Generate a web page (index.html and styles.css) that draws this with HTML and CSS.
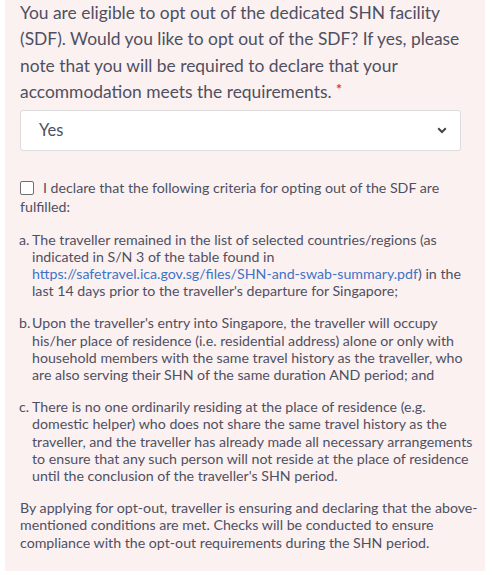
FILE: index.html
```html
<!DOCTYPE html>
<html>
<head>
<meta charset="utf-8">
<link rel="stylesheet" href="styles.css">
</head>
<body>
<div class="panel">
  <p class="question">You are eligible to opt out of the dedicated SHN facility (SDF). Would you like to opt out of the SDF? If yes, please note that you will be required to declare that your accommodation meets the requirements. <span class="req">*</span></p>
  <div class="select">
    <span>Yes</span>
    <svg class="chev" width="10" height="7" viewBox="0 0 10 7"><path d="M1.2 1.3 L5 5 L8.8 1.3" fill="none" stroke="#444" stroke-width="2"/></svg>
  </div>
  <div class="declare">
    <span class="box"></span>I declare that the following criteria for opting out of the SDF are fulfilled:
  </div>
  <ol class="criteria">
    <li><span class="mk">a.</span><span>The traveller remained in the list of selected countries/regions (as indicated in S/N 3 of the table found in <a href="#">https://safetravel.ica.gov.sg/files/SHN-and-swab-summary.pdf</a>) in the last 14 days prior to the traveller's departure for Singapore;</span></li>
    <li><span class="mk">b.</span><span>Upon the traveller's entry into Singapore, the traveller will occupy his/her place of residence (i.e. residential address) alone or only with household members with the same travel history as the traveller, who are also serving their SHN of the same duration AND period; and</span></li>
    <li><span class="mk">c.</span><span>There is no one ordinarily residing at the place of residence (e.g. domestic helper) who does not share the same travel history as the traveller, and the traveller has already made all necessary arrangements to ensure that any such person will not reside at the place of residence until the conclusion of the traveller's SHN period.</span></li>
  </ol>
  <p class="closing">By applying for opt-out, traveller is ensuring and declaring that the above-mentioned conditions are met. Checks will be conducted to ensure compliance with the opt-out requirements during the SHN period.</p>
</div>
</body>
</html>
```
FILE: styles.css
```css
html, body { margin: 0; padding: 0; background: #fff; }
body { font-family: Lato, "Liberation Sans", sans-serif; color: #4e5062; }
.panel {
  margin-left: 5px;
  width: 480px;
  height: 571px;
  background: #fcf1f1;
  padding: 0 5px 0 15px;
  box-sizing: border-box;
  display: flex;
  flex-direction: column;
}
.question {
  margin: 0;
  font-size: 17.4px;
  line-height: 26.4px;
}
.req { color: #e0333a; font-size: 14px; font-weight: bold; vertical-align: top; line-height: 20px; }
.select {
  margin-top: 4px;
  width: 441px;
  height: 41px;
  flex: none;
  box-sizing: border-box;
  background: #fff;
  border: 1px solid #dcdcdc;
  border-radius: 3px;
  display: flex;
  align-items: center;
  justify-content: space-between;
  padding: 0 13px 0 18px;
  font-size: 16.5px;
}
.declare {
  margin-top: 27px;
  font-size: 14.2px;
  line-height: 19px;
}
.box {
  display: inline-block;
  width: 12px;
  height: 12px;
  border: 1px solid #707070;
  border-radius: 2px;
  background: #fff;
  vertical-align: -2px;
  margin-right: 9px;
}
.criteria {
  list-style: none;
  margin: 15px 0 0;
  padding: 0;
  font-size: 14.2px;
  line-height: 17.2px;
}
.criteria li { display: flex; margin-bottom: 15px; }
.criteria .mk { width: 13px; flex: none; margin-left: -1px; }
.criteria a { color: #3d74c7; text-decoration: none; }
.closing {
  margin: 0;
  font-size: 14.2px;
  line-height: 17.2px;
}
```
